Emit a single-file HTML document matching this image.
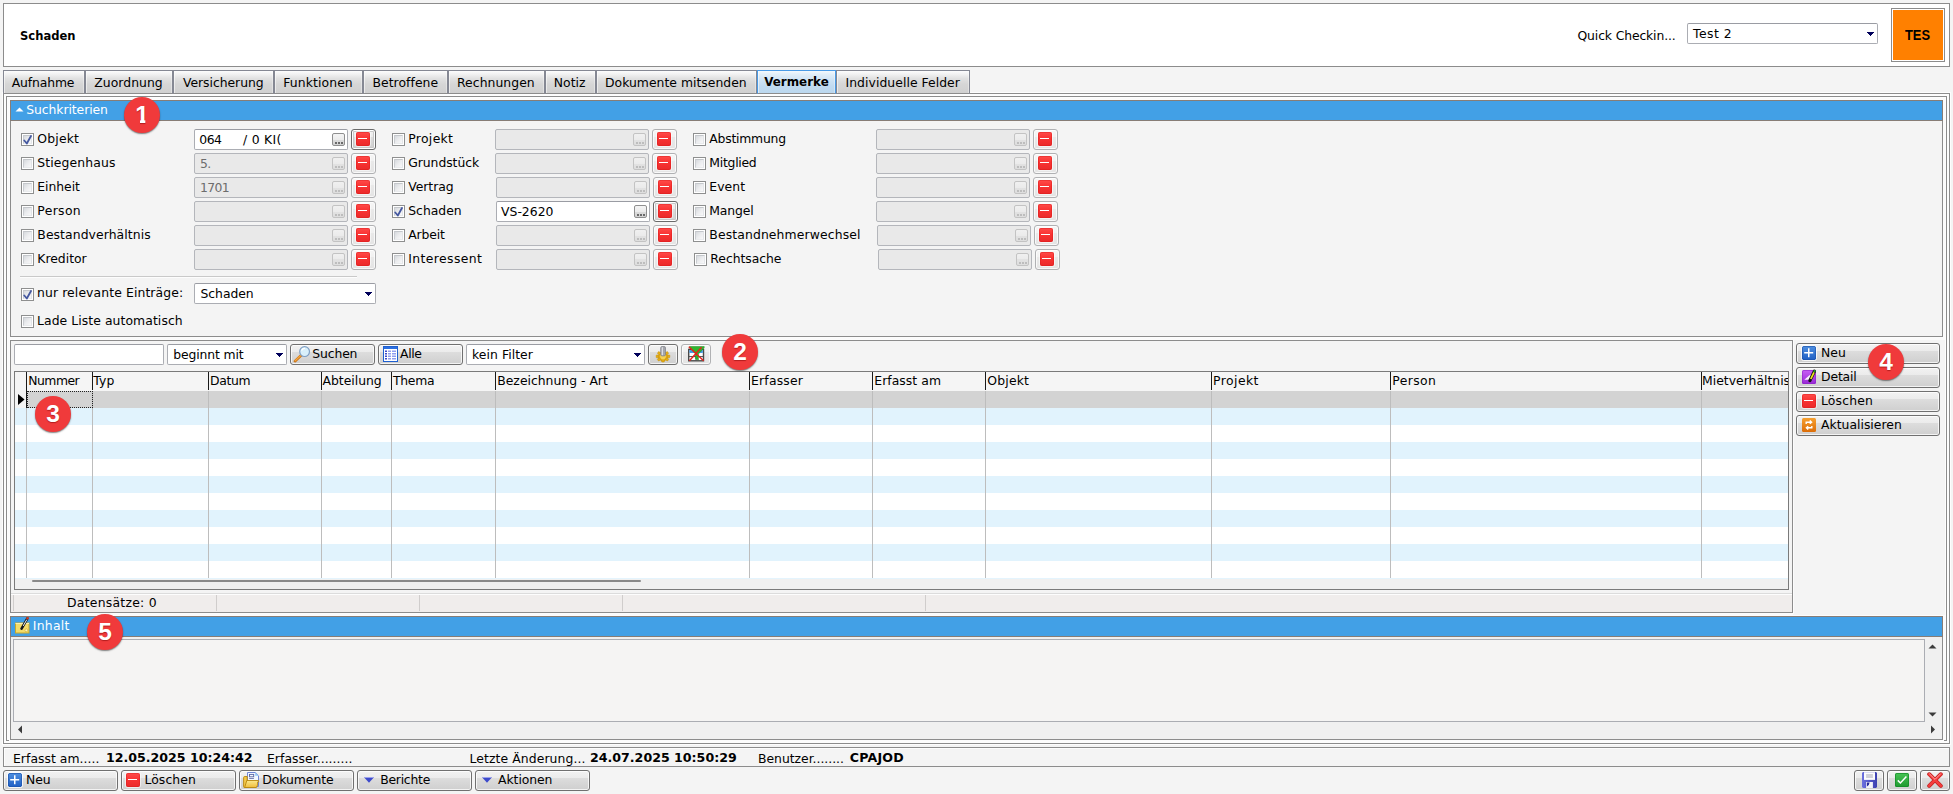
<!DOCTYPE html>
<html lang="de"><head><meta charset="utf-8"><title>Schaden</title>
<style>
html,body{margin:0;padding:0}
body{width:1953px;height:794px;overflow:hidden;background:#f4f4f4;position:relative;font-family:"DejaVu Sans","Liberation Sans",sans-serif;font-size:12.4px;color:#000}
div,span,svg{position:absolute;box-sizing:border-box}
.t{white-space:pre;line-height:normal}
.pnl{border:1px solid #8c8c8c;box-shadow:0 0 0 1px #fdfdfd,inset 0 0 0 1px #fdfdfd}
.grp{border:1px solid #8c8c8c;background:#f4f4f4;box-shadow:0 0 0 1px #fcfcfc}
.hdr{background:#42a0e6;border:1px solid #877d76}
.tab{border:1px solid #858893;border-bottom-color:#8c8c8c;box-shadow:inset 1px 0 0 rgba(255,255,255,.55),inset -1px 0 0 rgba(255,255,255,.35);background:linear-gradient(#fdfdfd 0%,#f2f2f2 14%,#e1e1e1 34%,#d6d6d6 60%,#d0d0d0 100%)}
.tab.act{border-color:#4a9be6 #4a9be6 #8c8c8c #4a9be6;background:linear-gradient(#f4f9fd 0%,#e2eff9 14%,#cfe3f4 40%,#c0daf0 70%,#bbd7ee 100%)}
.inp{border:1px solid #abadb3;border-top-color:#9a9ca3;background:#fff;border-radius:2px}
.inp.dis{background:#e9e9e9;border-color:#b4b6bb}
.dots{border:1px solid #8f8f8f;border-radius:2px;background:linear-gradient(#f4f4f4 0%,#ececec 50%,#dcdcdc 50%,#d3d3d3 100%)}
.dots.dis{border-color:#c3c3c3;background:linear-gradient(#f0f0f0 0%,#ebebeb 50%,#e2e2e2 50%,#dedede 100%)}
.dots i{position:absolute;bottom:1px;width:2px;height:2px;background:#6a6a6a}
.dots.dis i{background:#bdbdbd}
.btn{border:1px solid #707070;border-radius:3px;background:linear-gradient(#f2f2f2 0%,#ebebeb 37%,#dddddd 37%,#cfcfcf 100%);box-shadow:inset 0 0 0 1px rgba(255,255,255,.75)}
.btn.lt{border-color:#b0b1b3;background:linear-gradient(#f6f6f6 0%,#f1f1f1 37%,#e9e9e9 37%,#e4e4e4 100%)}
.btn.foc{border-color:#6a6a6a;box-shadow:inset 0 0 0 1px #fff,inset 0 0 0 2px #c8c8c8}
.cb{border:1px solid #8e8f8f;background:#fff}
.cb b{position:absolute;box-sizing:border-box;left:1px;top:1px;width:9px;height:9px;border:1px solid #d4d6d9;border-color:#c4c7cb #e3e5e8 #e9ebed #c9ccd0;background:linear-gradient(135deg,#d6d9dd 0%,#ebecee 50%,#f8f8f9 100%)}
.sel{border:1px solid #abadb3;border-top-color:#9a9ca3;background:#fff;border-radius:2px}
.arr{width:0;height:0;border-left:3.5px solid transparent;border-right:3.5px solid transparent;border-top:4px solid #00004e}
.circ{width:36px;height:36px;border-radius:50%;background:#f03a3b;box-shadow:0 1px 1.5px rgba(0,0,0,.5);text-shadow:0 1px 1px rgba(120,0,0,.5);color:#fff;font:bold 24.5px "Liberation Sans",sans-serif;text-align:center;line-height:36px}
.rm{width:14px;height:14px;border-radius:2px;background:linear-gradient(#ff4c4a 0%,#f93333 45%,#ea2a2a 100%);box-shadow:inset 0 0 0 1px rgba(215,25,25,.4),0 0 0 1px rgba(255,255,255,.55)}
.rm i{position:absolute;left:2.3px;top:5.8px;width:9px;height:1.7px;background:#fff}
.circ .one{position:static;display:inline-block;clip-path:polygon(0 0,100% 0,100% 22.6px,10.2px 22.6px,10.2px 100%,4.8px 100%,4.8px 22.6px,0 22.6px)}

</style></head>
<body>
<div style="left:3px;top:3px;width:1947px;height:64px;border:1px solid #8c8c8c;background:#fff"></div>
<span class="t" style="left:20.00px;top:29px;font-size:11.55px;font-weight:bold;">Schaden</span>
<span class="t" style="left:1577.50px;top:28px;letter-spacing:-0.134px;">Quick Checkin...</span>
<div class="sel" style="left:1687px;top:23px;width:191px;height:21px;"></div>
<span class="t" style="left:1693.06px;top:26px;letter-spacing:0.484px;">Test 2</span>
<svg style="left:1867px;top:32px" width="7" height="4" viewBox="0 0 7 4" shape-rendering="crispEdges"><path d="M0 0H7V1H6V2H5V3H4V4H3V3H2V2H1V1H0Z" fill="#00005a"/></svg>
<div style="left:1891px;top:8px;width:54px;height:54px;border:1px solid #8c8c8c;background:#fff"></div>
<div style="left:1893px;top:10px;width:50px;height:50px;background:#ff8000"></div>
<span class="t" style="left:1904.60px;top:27px;font-size:14px;font-weight:bold;font-family:'Liberation Sans',sans-serif;transform:scaleX(.92);transform-origin:0 0;">TES</span>
<div class="pnl" style="left:3px;top:93px;width:1947px;height:651px;z-index:0"></div>
<div class="pnl" style="left:6px;top:96px;width:1941px;height:645px;background:#fbfbfb"></div>
<div style="left:1793px;top:340px;width:152px;height:275px;background:#f4f4f4"></div>
<div class="tab" style="left:3px;top:70px;width:82px;height:24px;"></div>
<span class="t" style="left:11.75px;top:75px;letter-spacing:-0.141px;">Aufnahme</span>
<div class="tab" style="left:85px;top:70px;width:88px;height:24px;"></div>
<span class="t" style="left:94.25px;top:75px;letter-spacing:0.045px;">Zuordnung</span>
<div class="tab" style="left:173px;top:70px;width:101px;height:24px;"></div>
<span class="t" style="left:183.00px;top:75px;letter-spacing:-0.037px;">Versicherung</span>
<div class="tab" style="left:274px;top:70px;width:89px;height:24px;"></div>
<span class="t" style="left:283.25px;top:75px;letter-spacing:0.103px;">Funktionen</span>
<div class="tab" style="left:363px;top:70px;width:85px;height:24px;"></div>
<span class="t" style="left:372.50px;top:75px;letter-spacing:0.044px;">Betroffene</span>
<div class="tab" style="left:448px;top:70px;width:97px;height:24px;"></div>
<span class="t" style="left:457.00px;top:75px;letter-spacing:0.048px;">Rechnungen</span>
<div class="tab" style="left:545px;top:70px;width:51px;height:24px;"></div>
<span class="t" style="left:553.75px;top:75px;letter-spacing:0.017px;">Notiz</span>
<div class="tab" style="left:596px;top:70px;width:161px;height:24px;"></div>
<span class="t" style="left:605.00px;top:75px;letter-spacing:0.015px;">Dokumente mitsenden</span>
<div class="tab act" style="left:757px;top:70px;width:79px;height:24px;"></div>
<span class="t" style="left:764.25px;top:75px;font-size:11.9px;font-weight:bold;">Vermerke</span>
<div class="tab" style="left:836px;top:70px;width:134px;height:24px;"></div>
<span class="t" style="left:845.50px;top:75px;letter-spacing:0.051px;">Individuelle Felder</span>
<div class="grp" style="left:10px;top:100px;width:1933px;height:237px;"></div>
<div class="hdr" style="left:10px;top:100px;width:1933px;height:21px;"></div>
<svg style="left:15px;top:107px" width="9" height="5" viewBox="0 0 9 5"><path d="M0.5 4.5 L4.5 0.5 L8.5 4.5 Z" fill="#fff"/></svg>
<span class="t" style="left:26.25px;top:102px;letter-spacing:-0.075px;color:#fff;">Suchkriterien</span>
<div class="cb" style="left:21px;top:133px;width:13px;height:13px;"><b></b><svg style="left:1px;top:1px" width="11" height="11" viewBox="0 0 11 11"><path d="M1.3 5.5 L3.8 8.5 L8 1" fill="none" stroke="#4558a0" stroke-width="1.8" stroke-linecap="round" stroke-linejoin="round"/></svg></div>
<span class="t" style="left:37.30px;top:131px;letter-spacing:0.193px;">Objekt</span>
<div class="inp" style="left:194px;top:129px;width:154px;height:21px;"></div>
<div class="dots" style="left:332px;top:133px;width:13px;height:13px;"><i style="left:2px"></i><i style="left:5px"></i><i style="left:8px"></i></div>
<div class="btn foc" style="left:351px;top:129px;width:25px;height:21px;"></div>
<div class="rm" style="left:356px;top:132px"><i></i></div>
<div class="cb" style="left:392px;top:133px;width:13px;height:13px;"><b></b></div>
<span class="t" style="left:408.20px;top:131px;letter-spacing:0.337px;">Projekt</span>
<div class="inp dis" style="left:495px;top:129px;width:154px;height:21px;"></div>
<div class="dots dis" style="left:633px;top:133px;width:13px;height:13px;"><i style="left:2px"></i><i style="left:5px"></i><i style="left:8px"></i></div>
<div class="btn lt" style="left:652px;top:129px;width:25px;height:21px;"></div>
<div class="rm" style="left:657px;top:132px"><i></i></div>
<div class="cb" style="left:693px;top:133px;width:13px;height:13px;"><b></b></div>
<span class="t" style="left:709.30px;top:131px;letter-spacing:-0.235px;">Abstimmung</span>
<div class="inp dis" style="left:876px;top:129px;width:154px;height:21px;"></div>
<div class="dots dis" style="left:1014px;top:133px;width:13px;height:13px;"><i style="left:2px"></i><i style="left:5px"></i><i style="left:8px"></i></div>
<div class="btn lt" style="left:1033px;top:129px;width:25px;height:21px;"></div>
<div class="rm" style="left:1038px;top:132px"><i></i></div>
<div class="cb" style="left:21px;top:157px;width:13px;height:13px;"><b></b></div>
<span class="t" style="left:37.30px;top:155px;letter-spacing:0.126px;">Stiegenhaus</span>
<div class="inp dis" style="left:194px;top:153px;width:154px;height:21px;"></div>
<div class="dots dis" style="left:332px;top:157px;width:13px;height:13px;"><i style="left:2px"></i><i style="left:5px"></i><i style="left:8px"></i></div>
<div class="btn lt" style="left:351px;top:153px;width:25px;height:21px;"></div>
<div class="rm" style="left:356px;top:156px"><i></i></div>
<div class="cb" style="left:392px;top:157px;width:13px;height:13px;"><b></b></div>
<span class="t" style="left:408.20px;top:155px;letter-spacing:-0.048px;">Grundstück</span>
<div class="inp dis" style="left:495px;top:153px;width:154px;height:21px;"></div>
<div class="dots dis" style="left:633px;top:157px;width:13px;height:13px;"><i style="left:2px"></i><i style="left:5px"></i><i style="left:8px"></i></div>
<div class="btn lt" style="left:652px;top:153px;width:25px;height:21px;"></div>
<div class="rm" style="left:657px;top:156px"><i></i></div>
<div class="cb" style="left:693px;top:157px;width:13px;height:13px;"><b></b></div>
<span class="t" style="left:709.30px;top:155px;letter-spacing:-0.256px;">Mitglied</span>
<div class="inp dis" style="left:876px;top:153px;width:154px;height:21px;"></div>
<div class="dots dis" style="left:1014px;top:157px;width:13px;height:13px;"><i style="left:2px"></i><i style="left:5px"></i><i style="left:8px"></i></div>
<div class="btn lt" style="left:1033px;top:153px;width:25px;height:21px;"></div>
<div class="rm" style="left:1038px;top:156px"><i></i></div>
<div class="cb" style="left:21px;top:181px;width:13px;height:13px;"><b></b></div>
<span class="t" style="left:37.30px;top:179px;letter-spacing:-0.044px;">Einheit</span>
<div class="inp dis" style="left:194px;top:177px;width:154px;height:21px;"></div>
<div class="dots dis" style="left:332px;top:181px;width:13px;height:13px;"><i style="left:2px"></i><i style="left:5px"></i><i style="left:8px"></i></div>
<div class="btn lt" style="left:351px;top:177px;width:25px;height:21px;"></div>
<div class="rm" style="left:356px;top:180px"><i></i></div>
<div class="cb" style="left:392px;top:181px;width:13px;height:13px;"><b></b></div>
<span class="t" style="left:408.20px;top:179px;letter-spacing:-0.024px;">Vertrag</span>
<div class="inp dis" style="left:496px;top:177px;width:154px;height:21px;"></div>
<div class="dots dis" style="left:634px;top:181px;width:13px;height:13px;"><i style="left:2px"></i><i style="left:5px"></i><i style="left:8px"></i></div>
<div class="btn lt" style="left:653px;top:177px;width:25px;height:21px;"></div>
<div class="rm" style="left:658px;top:180px"><i></i></div>
<div class="cb" style="left:693px;top:181px;width:13px;height:13px;"><b></b></div>
<span class="t" style="left:709.30px;top:179px;letter-spacing:0.056px;">Event</span>
<div class="inp dis" style="left:876px;top:177px;width:154px;height:21px;"></div>
<div class="dots dis" style="left:1014px;top:181px;width:13px;height:13px;"><i style="left:2px"></i><i style="left:5px"></i><i style="left:8px"></i></div>
<div class="btn lt" style="left:1033px;top:177px;width:25px;height:21px;"></div>
<div class="rm" style="left:1038px;top:180px"><i></i></div>
<div class="cb" style="left:21px;top:205px;width:13px;height:13px;"><b></b></div>
<span class="t" style="left:37.30px;top:203px;letter-spacing:0.357px;">Person</span>
<div class="inp dis" style="left:194px;top:201px;width:154px;height:21px;"></div>
<div class="dots dis" style="left:332px;top:205px;width:13px;height:13px;"><i style="left:2px"></i><i style="left:5px"></i><i style="left:8px"></i></div>
<div class="btn lt" style="left:351px;top:201px;width:25px;height:21px;"></div>
<div class="rm" style="left:356px;top:204px"><i></i></div>
<div class="cb" style="left:392px;top:205px;width:13px;height:13px;"><b></b><svg style="left:1px;top:1px" width="11" height="11" viewBox="0 0 11 11"><path d="M1.3 5.5 L3.8 8.5 L8 1" fill="none" stroke="#4558a0" stroke-width="1.8" stroke-linecap="round" stroke-linejoin="round"/></svg></div>
<span class="t" style="left:408.20px;top:203px;letter-spacing:0.007px;">Schaden</span>
<div class="inp" style="left:496px;top:201px;width:154px;height:21px;"></div>
<div class="dots" style="left:634px;top:205px;width:13px;height:13px;"><i style="left:2px"></i><i style="left:5px"></i><i style="left:8px"></i></div>
<div class="btn foc" style="left:653px;top:201px;width:25px;height:21px;"></div>
<div class="rm" style="left:658px;top:204px"><i></i></div>
<div class="cb" style="left:693px;top:205px;width:13px;height:13px;"><b></b></div>
<span class="t" style="left:709.30px;top:203px;letter-spacing:-0.115px;">Mangel</span>
<div class="inp dis" style="left:876px;top:201px;width:154px;height:21px;"></div>
<div class="dots dis" style="left:1014px;top:205px;width:13px;height:13px;"><i style="left:2px"></i><i style="left:5px"></i><i style="left:8px"></i></div>
<div class="btn lt" style="left:1033px;top:201px;width:25px;height:21px;"></div>
<div class="rm" style="left:1038px;top:204px"><i></i></div>
<div class="cb" style="left:21px;top:229px;width:13px;height:13px;"><b></b></div>
<span class="t" style="left:37.30px;top:227px;letter-spacing:0.081px;">Bestandverhältnis</span>
<div class="inp dis" style="left:194px;top:225px;width:154px;height:21px;"></div>
<div class="dots dis" style="left:332px;top:229px;width:13px;height:13px;"><i style="left:2px"></i><i style="left:5px"></i><i style="left:8px"></i></div>
<div class="btn lt" style="left:351px;top:225px;width:25px;height:21px;"></div>
<div class="rm" style="left:356px;top:228px"><i></i></div>
<div class="cb" style="left:392px;top:229px;width:13px;height:13px;"><b></b></div>
<span class="t" style="left:408.20px;top:227px;letter-spacing:-0.117px;">Arbeit</span>
<div class="inp dis" style="left:496px;top:225px;width:154px;height:21px;"></div>
<div class="dots dis" style="left:634px;top:229px;width:13px;height:13px;"><i style="left:2px"></i><i style="left:5px"></i><i style="left:8px"></i></div>
<div class="btn lt" style="left:653px;top:225px;width:25px;height:21px;"></div>
<div class="rm" style="left:658px;top:228px"><i></i></div>
<div class="cb" style="left:693px;top:229px;width:13px;height:13px;"><b></b></div>
<span class="t" style="left:709.30px;top:227px;letter-spacing:0.122px;">Bestandnehmerwechsel</span>
<div class="inp dis" style="left:877px;top:225px;width:154px;height:21px;"></div>
<div class="dots dis" style="left:1015px;top:229px;width:13px;height:13px;"><i style="left:2px"></i><i style="left:5px"></i><i style="left:8px"></i></div>
<div class="btn lt" style="left:1034px;top:225px;width:25px;height:21px;"></div>
<div class="rm" style="left:1039px;top:228px"><i></i></div>
<div class="cb" style="left:21px;top:253px;width:13px;height:13px;"><b></b></div>
<span class="t" style="left:37.30px;top:251px;">Kreditor</span>
<div class="inp dis" style="left:194px;top:249px;width:154px;height:21px;"></div>
<div class="dots dis" style="left:332px;top:253px;width:13px;height:13px;"><i style="left:2px"></i><i style="left:5px"></i><i style="left:8px"></i></div>
<div class="btn lt" style="left:351px;top:249px;width:25px;height:21px;"></div>
<div class="rm" style="left:356px;top:252px"><i></i></div>
<div class="cb" style="left:392px;top:253px;width:13px;height:13px;"><b></b></div>
<span class="t" style="left:408.20px;top:251px;letter-spacing:0.405px;">Interessent</span>
<div class="inp dis" style="left:496px;top:249px;width:154px;height:21px;"></div>
<div class="dots dis" style="left:634px;top:253px;width:13px;height:13px;"><i style="left:2px"></i><i style="left:5px"></i><i style="left:8px"></i></div>
<div class="btn lt" style="left:653px;top:249px;width:25px;height:21px;"></div>
<div class="rm" style="left:658px;top:252px"><i></i></div>
<div class="cb" style="left:694px;top:253px;width:13px;height:13px;"><b></b></div>
<span class="t" style="left:710.30px;top:251px;letter-spacing:-0.040px;">Rechtsache</span>
<div class="inp dis" style="left:878px;top:249px;width:154px;height:21px;"></div>
<div class="dots dis" style="left:1016px;top:253px;width:13px;height:13px;"><i style="left:2px"></i><i style="left:5px"></i><i style="left:8px"></i></div>
<div class="btn lt" style="left:1035px;top:249px;width:25px;height:21px;"></div>
<div class="rm" style="left:1040px;top:252px"><i></i></div>
<span class="t" style="left:199.25px;top:132px;letter-spacing:-0.467px;">064</span>
<span class="t" style="left:243.00px;top:132px;letter-spacing:0.278px;">/ 0 KI(</span>
<span class="t" style="left:200.00px;top:156px;letter-spacing:-0.600px;color:#6d6d6d;">5.</span>
<span class="t" style="left:200.00px;top:180px;letter-spacing:-0.600px;color:#6d6d6d;">1701</span>
<span class="t" style="left:501.00px;top:204px;letter-spacing:0.018px;">VS-2620</span>
<div style="left:20px;top:276px;width:337px;height:1px;background:#c9c9c9"></div>
<div style="left:20px;top:277px;width:337px;height:1px;background:#fdfdfd"></div>
<div class="cb" style="left:21px;top:288px;width:13px;height:13px;"><b></b><svg style="left:1px;top:1px" width="11" height="11" viewBox="0 0 11 11"><path d="M1.3 5.5 L3.8 8.5 L8 1" fill="none" stroke="#4558a0" stroke-width="1.8" stroke-linecap="round" stroke-linejoin="round"/></svg></div>
<span class="t" style="left:37.00px;top:285px;letter-spacing:0.107px;">nur relevante Einträge:</span>
<div class="sel" style="left:194px;top:283px;width:182px;height:21px;"></div>
<span class="t" style="left:200.50px;top:286px;letter-spacing:-0.043px;">Schaden</span>
<svg style="left:365px;top:292px" width="7" height="4" viewBox="0 0 7 4" shape-rendering="crispEdges"><path d="M0 0H7V1H6V2H5V3H4V4H3V3H2V2H1V1H0Z" fill="#00005a"/></svg>
<div class="cb" style="left:21px;top:315px;width:13px;height:13px;"><b></b></div>
<span class="t" style="left:37.00px;top:313px;letter-spacing:0.073px;">Lade Liste automatisch</span>
<div class="grp" style="left:10px;top:340px;width:1783px;height:273px;"></div>
<div class="inp" style="left:14px;top:344px;width:150px;height:21px;"></div>
<div class="sel" style="left:167px;top:344px;width:120px;height:21px;"></div>
<span class="t" style="left:173.25px;top:347px;letter-spacing:-0.123px;">beginnt mit</span>
<svg style="left:276px;top:353px" width="7" height="4" viewBox="0 0 7 4" shape-rendering="crispEdges"><path d="M0 0H7V1H6V2H5V3H4V4H3V3H2V2H1V1H0Z" fill="#00005a"/></svg>
<div class="btn" style="left:290px;top:344px;width:85px;height:21px;"></div>
<svg style="left:293px;top:346px" width="18" height="17" viewBox="0 0 18 17"><path d="M8.2 9.3 L2 15.2" stroke="#c9741a" stroke-width="2.6" stroke-linecap="round"/><path d="M8 9.2 L2.2 14.7" stroke="#f6a63c" stroke-width="1.2" stroke-linecap="round"/><circle cx="11.6" cy="5.6" r="4.9" fill="#d9f0fb" stroke="#7f9fc4" stroke-width="1.2"/><path d="M8.6 4.6 A3.2 3.2 0 0 1 12 2.4" stroke="#fff" stroke-width="1.3" fill="none"/></svg>
<span class="t" style="left:312.30px;top:346px;letter-spacing:-0.136px;">Suchen</span>
<div class="btn" style="left:378px;top:344px;width:85px;height:21px;"></div>
<svg style="left:383px;top:346px" width="15" height="16" viewBox="0 0 15 16"><rect x="0.5" y="0.5" width="14" height="15" fill="#fff" stroke="#1e5fd0"/><rect x="1" y="1" width="13" height="2" fill="#2c6fe0"/><g fill="#3b49c8"><rect x="2" y="4.5" width="2" height="1.5"/><rect x="2" y="7" width="2" height="1.5"/><rect x="2" y="9.5" width="2" height="1.5"/><rect x="2" y="12" width="2" height="1.5"/></g><g fill="#8f9df0"><rect x="5" y="4.5" width="3" height="1.5"/><rect x="5" y="7" width="3" height="1.5"/><rect x="5" y="9.5" width="3" height="1.5"/><rect x="5" y="12" width="3" height="1.5"/><rect x="9" y="4.5" width="4" height="1.5"/><rect x="9" y="7" width="4" height="1.5"/><rect x="9" y="9.5" width="4" height="1.5"/><rect x="9" y="12" width="4" height="1.5"/></g></svg>
<span class="t" style="left:400.00px;top:346px;letter-spacing:-0.334px;">Alle</span>
<div class="sel" style="left:466px;top:344px;width:179px;height:21px;"></div>
<span class="t" style="left:472.00px;top:347px;letter-spacing:0.061px;">kein Filter</span>
<svg style="left:634px;top:353px" width="7" height="4" viewBox="0 0 7 4" shape-rendering="crispEdges"><path d="M0 0H7V1H6V2H5V3H4V4H3V3H2V2H1V1H0Z" fill="#00005a"/></svg>
<div class="btn" style="left:648px;top:344px;width:30px;height:21px;"></div>
<svg style="left:655px;top:346px" width="16" height="17" viewBox="0 0 16 17"><g fill="#e6ad14" stroke="#c08c0a" stroke-width=".5"><circle cx="8" cy="10.4" r="4.6"/><rect x="6.6" y="13.6" width="2.8" height="2.4" rx=".6"/><rect x="1.2" y="9" width="2.4" height="2.8" rx=".6"/><rect x="12.4" y="9" width="2.4" height="2.8" rx=".6"/><rect x="2.6" y="12.2" width="2.8" height="2.4" rx=".6" transform="rotate(-45 4 13.4)"/><rect x="10.6" y="12.2" width="2.8" height="2.4" rx=".6" transform="rotate(45 12 13.4)"/><rect x="2.7" y="6" width="2.8" height="2.4" rx=".6" transform="rotate(45 4.1 7.2)"/><rect x="10.5" y="6" width="2.8" height="2.4" rx=".6" transform="rotate(-45 11.9 7.2)"/></g><circle cx="8" cy="10.6" r="2.8" fill="#f5d256"/><rect x="5.7" y="0.5" width="4.8" height="9.4" rx="1.4" fill="#a4a6ac" stroke="#7c7e85" stroke-width=".7"/><rect x="6.7" y="1.2" width="1.3" height="8" fill="#dcdde1"/></svg>
<div class="btn lt" style="left:681px;top:344px;width:30px;height:21px;"></div>
<svg style="left:688px;top:346px" width="17" height="16" viewBox="0 0 17 16"><rect x="0.7" y="3.4" width="14.8" height="11.4" fill="#fff" stroke="#4a4a4a" stroke-width="1.4"/><rect x="1.4" y="4.1" width="13.4" height="2.8" fill="#3a96e8"/><path d="M1 10.6 H15 M8 7 V14.5" stroke="#4a4a4a" stroke-width="1"/><path d="M1.6 0.5 H16.2 V1.8 L10.4 8 V14 L7.6 13 V8 L1.6 1.8 Z" fill="#2fb52f" stroke="#1f8f1f" stroke-width=".5"/><path d="M0.8 0.8 L15.6 14.8 M13.6 1.2 L1.4 14.8" stroke="#e8201c" stroke-width="1.4"/></svg>
<div style="left:14px;top:371px;width:1775px;height:219px;border:1px solid #7a7a7a;background:#f0f0f0"></div>
<div style="left:15px;top:391px;width:1773px;height:17px;background:#d3d3d3"></div>
<div style="left:15px;top:408px;width:1773px;height:17px;background:#e1f3fd"></div>
<div style="left:15px;top:425px;width:1773px;height:17px;background:#ffffff"></div>
<div style="left:15px;top:442px;width:1773px;height:17px;background:#e1f3fd"></div>
<div style="left:15px;top:459px;width:1773px;height:17px;background:#ffffff"></div>
<div style="left:15px;top:476px;width:1773px;height:17px;background:#e1f3fd"></div>
<div style="left:15px;top:493px;width:1773px;height:17px;background:#ffffff"></div>
<div style="left:15px;top:510px;width:1773px;height:17px;background:#e1f3fd"></div>
<div style="left:15px;top:527px;width:1773px;height:17px;background:#ffffff"></div>
<div style="left:15px;top:544px;width:1773px;height:17px;background:#e1f3fd"></div>
<div style="left:15px;top:561px;width:1773px;height:17px;background:#ffffff"></div>
<div style="left:15px;top:578px;width:1773px;height:1px;background:#e4f4fd"></div>
<div style="left:15px;top:391px;width:11px;height:17px;background:#f4f4f4"></div>
<div style="left:15px;top:372px;width:1773px;height:19px;background:#f5f5f5"></div>
<div style="left:26px;top:391px;width:1px;height:187px;background:#bdbdbd"></div>
<div style="left:26px;top:372px;width:1px;height:36px;background:#1a1a1a"></div>
<span class="t" style="left:28.15px;top:373px;letter-spacing:-0.483px;">Nummer</span>
<div style="left:92px;top:391px;width:1px;height:187px;background:#bdbdbd"></div>
<div style="left:92px;top:372px;width:1px;height:18px;background:#1a1a1a"></div>
<span class="t" style="left:93.31px;top:373px;letter-spacing:0.178px;">Typ</span>
<div style="left:208px;top:391px;width:1px;height:187px;background:#bdbdbd"></div>
<div style="left:208px;top:372px;width:1px;height:18px;background:#1a1a1a"></div>
<span class="t" style="left:210.00px;top:373px;letter-spacing:-0.306px;">Datum</span>
<div style="left:321px;top:391px;width:1px;height:187px;background:#bdbdbd"></div>
<div style="left:321px;top:372px;width:1px;height:18px;background:#1a1a1a"></div>
<span class="t" style="left:322.50px;top:373px;letter-spacing:-0.011px;">Abteilung</span>
<div style="left:391px;top:391px;width:1px;height:187px;background:#bdbdbd"></div>
<div style="left:391px;top:372px;width:1px;height:18px;background:#1a1a1a"></div>
<span class="t" style="left:393.06px;top:373px;letter-spacing:-0.320px;">Thema</span>
<div style="left:495px;top:391px;width:1px;height:187px;background:#bdbdbd"></div>
<div style="left:495px;top:372px;width:1px;height:18px;background:#1a1a1a"></div>
<span class="t" style="left:497.25px;top:373px;">Bezeichnung - Art</span>
<div style="left:749px;top:391px;width:1px;height:187px;background:#bdbdbd"></div>
<div style="left:749px;top:372px;width:1px;height:18px;background:#1a1a1a"></div>
<span class="t" style="left:751.00px;top:373px;letter-spacing:0.201px;">Erfasser</span>
<div style="left:872px;top:391px;width:1px;height:187px;background:#bdbdbd"></div>
<div style="left:872px;top:372px;width:1px;height:18px;background:#1a1a1a"></div>
<span class="t" style="left:874.25px;top:373px;letter-spacing:0.052px;">Erfasst am</span>
<div style="left:985px;top:391px;width:1px;height:187px;background:#bdbdbd"></div>
<div style="left:985px;top:372px;width:1px;height:18px;background:#1a1a1a"></div>
<span class="t" style="left:987.25px;top:373px;letter-spacing:0.203px;">Objekt</span>
<div style="left:1211px;top:391px;width:1px;height:187px;background:#bdbdbd"></div>
<div style="left:1211px;top:372px;width:1px;height:18px;background:#1a1a1a"></div>
<span class="t" style="left:1213.00px;top:373px;letter-spacing:0.453px;">Projekt</span>
<div style="left:1390px;top:391px;width:1px;height:187px;background:#bdbdbd"></div>
<div style="left:1390px;top:372px;width:1px;height:18px;background:#1a1a1a"></div>
<span class="t" style="left:1392.25px;top:373px;letter-spacing:0.417px;">Person</span>
<div style="left:1701px;top:391px;width:1px;height:187px;background:#bdbdbd"></div>
<div style="left:1701px;top:372px;width:1px;height:18px;background:#1a1a1a"></div>
<div style="left:1702px;top:372px;width:86px;height:18px;overflow:hidden"><span class="t" style="left:0.1px;top:1px">Mietverhältnis</span></div>
<div style="left:27px;top:391px;width:66px;height:17px;border:1px dotted #222"></div>
<svg style="left:18px;top:394px" width="7" height="11" viewBox="0 0 7 11"><path d="M0 0 L6.5 5.5 L0 11 Z" fill="#000"/></svg>
<div style="left:32px;top:580px;width:609px;height:2px;background:#8a8a8a;border-radius:1px"></div>
<div style="left:11px;top:593px;width:1781px;height:19px;background:#f0edec;border-top:1px solid #dcdcdc;box-shadow:inset 0 1px 0 #fdfdfd"></div>
<div style="left:13px;top:595px;width:1px;height:16px;background:#d0cdcc"></div>
<div style="left:216px;top:595px;width:1px;height:16px;background:#d0cdcc"></div>
<div style="left:419px;top:595px;width:1px;height:16px;background:#d0cdcc"></div>
<div style="left:622px;top:595px;width:1px;height:16px;background:#d0cdcc"></div>
<div style="left:925px;top:595px;width:1px;height:16px;background:#d0cdcc"></div>
<span class="t" style="left:67.00px;top:595px;letter-spacing:0.262px;">Datensätze: 0</span>
<div class="btn" style="left:1796px;top:343px;width:144px;height:21px;"></div>
<span class="t" style="left:1821.00px;top:345px;letter-spacing:0.081px;">Neu</span>
<div class="btn" style="left:1796px;top:367px;width:144px;height:21px;"></div>
<span class="t" style="left:1821.00px;top:369px;letter-spacing:-0.144px;">Detail</span>
<div class="btn" style="left:1796px;top:391px;width:144px;height:21px;"></div>
<span class="t" style="left:1821.00px;top:393px;letter-spacing:0.166px;">Löschen</span>
<div class="btn" style="left:1796px;top:415px;width:144px;height:21px;"></div>
<span class="t" style="left:1821.00px;top:417px;letter-spacing:0.006px;">Aktualisieren</span>
<svg style="left:1802px;top:346px;overflow:visible" width="14" height="14" viewBox="0 0 14 14"><defs><linearGradient id="gb1" x1="0" y1="0" x2="0" y2="1"><stop offset="0" stop-color="#4f8fe0"/><stop offset="1" stop-color="#1f5fc4"/></linearGradient></defs><rect width="14" height="14" rx="1.5" fill="url(#gb1)"/><rect x="0.5" y="0.5" width="13" height="13" rx="1.2" fill="none" stroke="#1d52a8" stroke-opacity=".6"/><rect x="-0.5" y="-0.5" width="15" height="15" rx="2" fill="none" stroke="#fff" stroke-opacity=".8"/><path d="M6.75 2.2 V11.2 M2.2 6.75 H11.2" stroke="#fff" stroke-width="1.5"/></svg>
<svg style="left:1802px;top:369px" width="15" height="15" viewBox="0 0 15 15"><defs><linearGradient id="gp" x1="0" y1="0" x2="0" y2="1"><stop offset="0" stop-color="#c860f4"/><stop offset="1" stop-color="#9828d6"/></linearGradient></defs><rect y="1" width="14" height="14" rx="1.5" fill="url(#gp)"/><rect x="0.5" y="1.5" width="13" height="13" rx="1.2" fill="none" stroke="#8a22c4" stroke-opacity=".55"/><path d="M2.3 10.7 H10.4 L8.4 5.6 Z" fill="#fbf4fe"/><path d="M12.4 2.3 L7.9 11.6" stroke="#16161a" stroke-width="3.3" stroke-linecap="round"/><path d="M7.2 12.9 L7.5 10.6 L9 11.4 Z" fill="#16161a"/><path d="M12 3.4 L8.8 10" stroke="#f0e818" stroke-width="1.7"/><circle cx="12.5" cy="2.2" r="1.1" fill="#28a028"/></svg>
<div class="rm" style="left:1802px;top:394px"><i></i></div>
<svg style="left:1802px;top:418px" width="14" height="14" viewBox="0 0 14 14"><defs><linearGradient id="go" x1="0" y1="0" x2="0" y2="1"><stop offset="0" stop-color="#f6a030"/><stop offset="1" stop-color="#dc6d08"/></linearGradient></defs><rect width="14" height="14" rx="1.5" fill="url(#go)"/><path d="M4.2 6 V4.2 H9.2 M7.8 2.6 L9.6 4.2 L7.8 5.8 M9.8 8 V9.8 H4.8 M6.2 8.2 L4.4 9.8 L6.2 11.4" fill="none" stroke="#fff" stroke-width="1.4"/></svg>
<div class="grp" style="left:10px;top:616px;width:1933px;height:124px;"></div>
<div class="hdr" style="left:10px;top:616px;width:1933px;height:21px;"></div>
<svg style="left:15px;top:617px" width="15" height="17" viewBox="0 0 15 17"><rect x="0.5" y="6" width="13.5" height="10" fill="#f3dc6a" stroke="#c9a82a"/><path d="M0.5 6.5 H14" stroke="#fbf0b0"/><circle cx="11.3" cy="13.3" r="1.4" fill="#fbf3c0" stroke="#c9a82a" stroke-width=".6"/><path d="M12.4 1.4 L6.6 11.6" stroke="#15181c" stroke-width="2.6" stroke-linecap="round"/><path d="M11.6 3 L8.4 8.6" stroke="#e8f2fb" stroke-width="1" stroke-linecap="round"/><circle cx="12.6" cy="1.2" r="1.2" fill="#d83a1c"/></svg>
<span class="t" style="left:32.80px;top:618px;letter-spacing:0.244px;color:#fff;">Inhalt</span>
<div style="left:11px;top:637px;width:1931px;height:102px;background:#f0f0f0"></div>
<div style="left:13px;top:639px;width:1912px;height:83px;border:1px solid #abadb3;background:#f5f4f3"></div>
<svg style="left:17px;top:725px" width="6" height="9" viewBox="0 0 6 9"><path d="M5 0.5 L1 4.5 L5 8.5 Z" fill="#3c3c3c"/></svg>
<svg style="left:1930px;top:725px" width="6" height="9" viewBox="0 0 6 9"><path d="M1 0.5 L5 4.5 L1 8.5 Z" fill="#3c3c3c"/></svg>
<svg style="left:1928px;top:644px" width="9" height="5" viewBox="0 0 9 5"><path d="M0.5 4.5 L4.5 0.5 L8.5 4.5 Z" fill="#3c3c3c"/></svg>
<svg style="left:1928px;top:712px" width="9" height="5" viewBox="0 0 9 5"><path d="M0.5 0.5 L4.5 4.5 L8.5 0.5 Z" fill="#3c3c3c"/></svg>
<div style="left:3px;top:747px;width:1947px;height:20px;border:1px solid #8c8c8c;box-shadow:inset 1px 1px 0 #fdfdfd"></div>
<span class="t" style="left:13.00px;top:751px;letter-spacing:0.036px;">Erfasst am.....</span>
<span class="t" style="left:106.00px;top:750px;font-size:12.58px;font-weight:bold;">12.05.2025 10:24:42</span>
<span class="t" style="left:267.00px;top:751px;letter-spacing:0.039px;">Erfasser.........</span>
<span class="t" style="left:469.50px;top:751px;letter-spacing:0.091px;">Letzte Änderung...</span>
<span class="t" style="left:590.00px;top:750px;font-size:12.6px;font-weight:bold;">24.07.2025 10:50:29</span>
<span class="t" style="left:758.00px;top:751px;letter-spacing:-0.024px;">Benutzer........</span>
<span class="t" style="left:849.75px;top:750px;font-size:12.6px;letter-spacing:0.216px;font-weight:bold;">CPAJOD</span>
<div class="btn" style="left:3px;top:770px;width:115px;height:21px;"></div>
<span class="t" style="left:26.10px;top:772px;letter-spacing:-0.069px;">Neu</span>
<div class="btn" style="left:121px;top:770px;width:115px;height:21px;"></div>
<span class="t" style="left:144.40px;top:772px;letter-spacing:0.100px;">Löschen</span>
<div class="btn" style="left:239px;top:770px;width:115px;height:21px;"></div>
<span class="t" style="left:262.20px;top:772px;letter-spacing:-0.032px;">Dokumente</span>
<div class="btn" style="left:357px;top:770px;width:115px;height:21px;"></div>
<span class="t" style="left:380.20px;top:772px;letter-spacing:-0.247px;">Berichte</span>
<div class="btn" style="left:475px;top:770px;width:115px;height:21px;"></div>
<span class="t" style="left:498.10px;top:772px;letter-spacing:-0.076px;">Aktionen</span>
<svg style="left:8px;top:773px;overflow:visible" width="14" height="14" viewBox="0 0 14 14"><defs><linearGradient id="gb2" x1="0" y1="0" x2="0" y2="1"><stop offset="0" stop-color="#4f8fe0"/><stop offset="1" stop-color="#1f5fc4"/></linearGradient></defs><rect width="14" height="14" rx="1.5" fill="url(#gb2)"/><rect x="0.5" y="0.5" width="13" height="13" rx="1.2" fill="none" stroke="#1d52a8" stroke-opacity=".6"/><rect x="-0.5" y="-0.5" width="15" height="15" rx="2" fill="none" stroke="#fff" stroke-opacity=".8"/><path d="M6.75 2.2 V11.2 M2.2 6.75 H11.2" stroke="#fff" stroke-width="1.5"/></svg>
<div class="rm" style="left:126px;top:773px"><i></i></div>
<svg style="left:243px;top:772px" width="16" height="17" viewBox="0 0 16 17"><defs><linearGradient id="gf" x1="0" y1="0" x2="0" y2="1"><stop offset="0" stop-color="#fbe98e"/><stop offset="1" stop-color="#f0bd3a"/></linearGradient></defs><path d="M4.5 0.5 H12.2 L15.5 3.8 V14.5 H4.5 Z" fill="#f3f8ff" stroke="#6f86d6"/><path d="M12.2 0.6 V3.8 H15.4 Z" fill="#8cc8f6"/><rect x="6.5" y="2.4" width="4.2" height="2.4" fill="none" stroke="#5a64a0" stroke-width=".9"/><path d="M6.2 6.5 H10.9" stroke="#6a74ac" stroke-width=".9"/><path d="M0.6 5.6 Q0.6 4.5 1.8 4.5 H4.2 V15.5 H1.4 Q0.6 15.5 0.6 14.6 Z" fill="#f2c84a" stroke="#b8860b" stroke-width=".9"/><path d="M1.6 15.5 L3.8 8.5 H15.4 V10 H14.6 V13 L13.4 15.5 Z" fill="url(#gf)" stroke="#b8860b" stroke-width=".9" stroke-linejoin="round"/></svg>
<svg style="left:364px;top:777px" width="10" height="6" viewBox="0 0 10 6"><path d="M0 0.2 H10 L5 5.8 Z" fill="#3d4acc"/><path d="M0 0.5 H10" stroke="#9ca2ea" stroke-width="1"/></svg>
<svg style="left:482px;top:777px" width="10" height="6" viewBox="0 0 10 6"><path d="M0 0.2 H10 L5 5.8 Z" fill="#3d4acc"/><path d="M0 0.5 H10" stroke="#9ca2ea" stroke-width="1"/></svg>
<div class="btn" style="left:1854px;top:770px;width:30px;height:21px;"></div>
<div class="btn" style="left:1887px;top:770px;width:30px;height:21px;"></div>
<div class="btn" style="left:1920px;top:770px;width:30px;height:21px;"></div>
<svg style="left:1862px;top:772px" width="15" height="16" viewBox="0 0 15 16"><defs><linearGradient id="gs" x1="0" y1="0" x2="1" y2="0"><stop offset="0" stop-color="#6c70de"/><stop offset=".5" stop-color="#5357c8"/><stop offset="1" stop-color="#3d41b0"/></linearGradient></defs><path d="M1 0 H14 L15 1 V15 L14 16 H1 L0 15 V1 Z" fill="url(#gs)"/><rect x="2" y="0.2" width="11" height="7.7" fill="#fbfbfd"/><rect x="4.1" y="2" width="6.8" height="4" fill="#d0d0d9"/><rect x="4.1" y="10" width="6.8" height="6" fill="#f4f4f9"/><path d="M4.9 10.6 H7.6 Q7.2 13.8 4.9 14.6 Z" fill="#24279a"/></svg>
<svg style="left:1895px;top:773px" width="14" height="14" viewBox="0 0 14 14"><defs><linearGradient id="gg" x1="0" y1="0" x2="0" y2="1"><stop offset="0" stop-color="#48c455"/><stop offset="1" stop-color="#1f9a30"/></linearGradient></defs><rect width="14" height="14" rx="1.6" fill="url(#gg)"/><rect x="0.5" y="0.5" width="13" height="13" rx="1.3" fill="none" stroke="#148a28" stroke-opacity=".7"/><path d="M2.8 7.4 L5.4 10 L11.4 3.6" fill="none" stroke="#fff" stroke-width="1.5"/></svg>
<svg style="left:1927px;top:772px" width="16" height="16" viewBox="0 0 16 16"><path d="M2.2 2.2 L13.8 13.8 M13.8 2.2 L2.2 13.8" stroke="#b81818" stroke-width="3.9" stroke-linecap="round"/><path d="M2.2 2.2 L13.8 13.8 M13.8 2.2 L2.2 13.8" stroke="#f43c3c" stroke-width="2.7" stroke-linecap="round"/><path d="M2.6 2 L8 7.4 L13.4 2" stroke="#ffb0b0" stroke-width=".9" fill="none" stroke-linecap="round"/></svg>
<div class="circ" style="left:124px;top:96.6px"><span class="one">1</span></div>
<div class="circ" style="left:722px;top:333.8px">2</div>
<div class="circ" style="left:35px;top:395.5px">3</div>
<div class="circ" style="left:1868px;top:343.8px">4</div>
<div class="circ" style="left:87px;top:613.8px">5</div>
</body></html>
